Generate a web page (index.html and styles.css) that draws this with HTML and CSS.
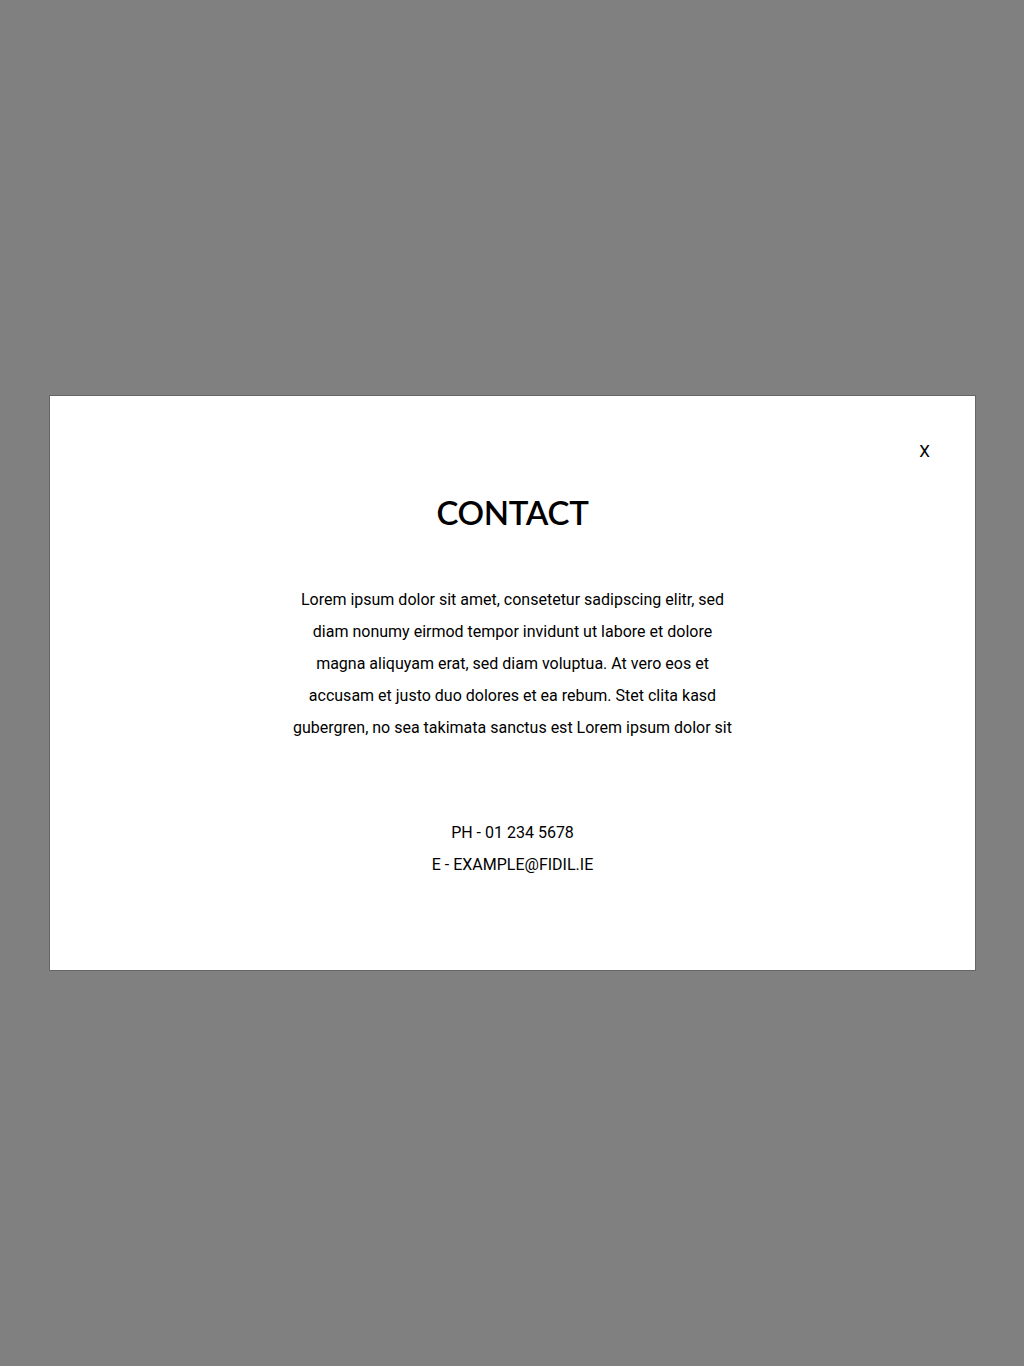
FILE: index.html
```html
<!DOCTYPE html>
<html lang="en">
<head>
<meta charset="utf-8">
<title>Contact</title>
<link rel="stylesheet" href="styles.css">
</head>
<body>
<div class="overlay">
  <div class="modal">
    <div class="modal-head">
      <button class="close" type="button">X</button>
    </div>
    <h1 class="title">CONTACT</h1>
    <p class="intro">Lorem ipsum dolor sit amet, consetetur sadipscing elitr, sed diam nonumy eirmod tempor invidunt ut labore et dolore magna aliquyam erat, sed diam voluptua. At vero eos et accusam et justo duo dolores et ea rebum. Stet clita kasd gubergren, no sea takimata sanctus est Lorem ipsum dolor sit</p>
    <div class="details">
      <p>PH - 01 234 5678</p>
      <p>E - EXAMPLE@FIDIL.IE</p>
    </div>
  </div>
</div>
</body>
</html>
```

FILE: styles.css
```css
html, body {
  margin: 0;
  padding: 0;
}
body {
  background: #808080;
  font-family: Roboto, "Liberation Sans", sans-serif;
  color: #000;
}
.overlay {
  min-height: 100vh;
  display: flex;
  align-items: center;
  justify-content: center;
  padding: 0 48px 0 49px;
  box-sizing: border-box;
}
.modal {
  width: 100%;
  background: #fff;
  border: 1px solid #666;
  box-sizing: border-box;
  padding: 40px 44px 89px 44px;
  display: flex;
  flex-direction: column;
  align-items: center;
}
.modal-head {
  align-self: stretch;
  display: flex;
  justify-content: flex-end;
  height: 30px;
}
.close {
  background: none;
  border: 0;
  padding: 0;
  margin-right: 1px;
  font-family: Roboto, "Liberation Sans", sans-serif;
  font-size: 17px;
  line-height: 30px;
  color: #000;
  cursor: pointer;
}
.title {
  margin: 26px 0 0;
  font-family: Lato, "Noto Sans", sans-serif;
  font-weight: 600;
  font-size: 33px;
  line-height: 40px;
  letter-spacing: -0.3px;
}
.intro {
  margin: 52px 0 0;
  max-width: 450px;
  text-align: center;
  font-size: 16px;
  line-height: 32px;
}
.details {
  margin-top: 73px;
  text-align: center;
  font-size: 16px;
  line-height: 32px;
}
.details p {
  margin: 0;
}
```
